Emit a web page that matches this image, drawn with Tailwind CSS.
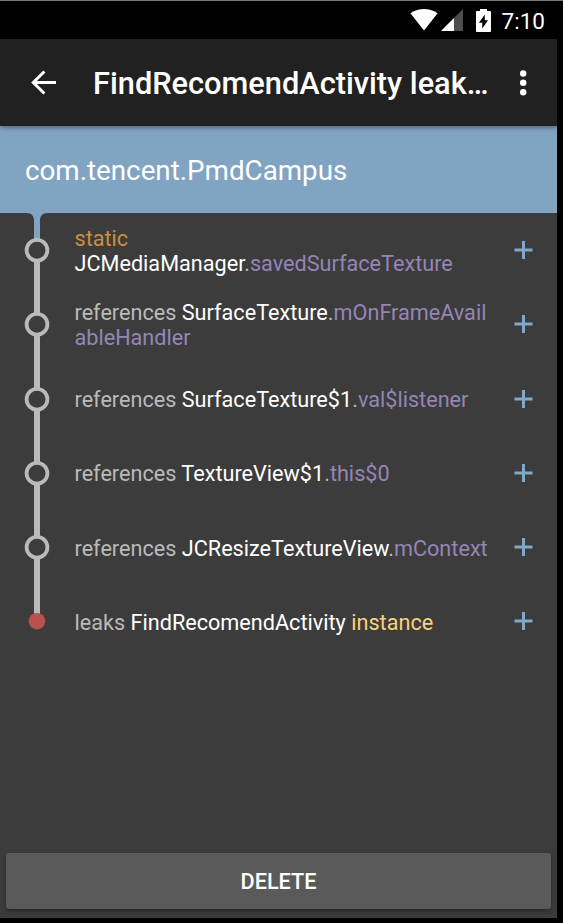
<!DOCTYPE html>
<html lang="en">
<head>
<meta charset="utf-8">
<title>Leak trace</title>
<script src="https://cdn.jsdelivr.net/npm/@tailwindcss/browser@4"></script>
</head>
<body class="bg-black">
<div class="flex h-[923px] w-[563px] flex-col overflow-hidden border-t border-[#777] bg-black font-['Roboto',sans-serif] text-white">
  <div class="flex h-[38px] shrink-0 items-center justify-end pr-[18px]">
    <svg class="mr-[3px] h-[22px] w-[28px]" viewBox="0 0 28 22"><path d="M0.4 4.2Q14-4.2 27.6 4.2L14 21.6Z" fill="#fff"/></svg>
    <svg class="mr-[13px] h-[22px] w-[22px]" viewBox="0 0 22 22"><path d="M22 0V22H0Z" fill="#4d4d4d"/><path d="M13 9V22H0Z" fill="#fff"/></svg>
    <svg class="mr-[11px] h-[23px] w-[15px]" viewBox="0 0 15 23"><path fill-rule="evenodd" d="M4 0h7v2h3q1 0 1 1v19q0 1-1 1h-13Q0 23 0 22V3q0-1 1-1H4ZM8.800 5.500L2.900 13.800H6.300V19.500L12 11.300H8.800Z" fill="#fff"/></svg>
    <span class="pt-[2px] text-[22.500px] leading-[36px]">7:10</span>
  </div>
  <div class="flex h-[879px] w-[557px] shrink-0 flex-col bg-[#3c3c3c]">
    <header class="z-10 flex h-[87px] shrink-0 items-center bg-[#212121] shadow-[0_1px_5px_rgba(0,0,0,0.5)]">
      <svg class="ml-[31px] h-[25px] w-[25px] shrink-0" viewBox="0 0 25 25" fill="none" stroke="#fff" stroke-width="3"><path d="M25 12.500H2.500M13.400 1.500L2.300 12.500L13.400 23.500"/></svg>
      <h1 class="ml-[37px] w-[400px] shrink-0 pt-[2px] text-[30.750px] leading-[40px] font-medium whitespace-nowrap">FindRecomendActivity leak…</h1>
      <svg class="ml-[26px] h-[26px] w-[8px] shrink-0" viewBox="0 0 8 26" fill="#fff"><circle cx="4.200" cy="3.500" r="3.200"/><circle cx="4.200" cy="12.800" r="3.200"/><circle cx="4.200" cy="22.200" r="3.200"/></svg>
    </header>
    <div class="flex h-[87px] shrink-0 items-center bg-[#81a4c3] pt-[3px] pl-[25px] text-[27.750px]">com.tencent.PmdCampus</div>
    <main class="flex flex-1 flex-col text-[21.650px] leading-[25px] whitespace-nowrap text-[#bababa]">
      <div class="flex h-[74.250px] items-center">
        <svg class="h-full w-[74.500px] shrink-0 overflow-visible"><path d="M26 0C32 0 34 3 34 8V26H40V8C40 3 42 0 48 0Z" fill="#81a4c3"/><path d="M37 48V76" stroke="#bababa" stroke-width="6"/><circle cx="37" cy="37.200" r="10.400" stroke="#bababa" stroke-width="3.800" fill="#3c3c3c"/></svg>
        <p class="w-[439px] pt-[2px]"><span class="text-[#cc8e40]">static</span><br><span class="text-white">JCMediaManager</span>.<span class="text-[#9585b5]">savedSurfaceTexture</span></p>
        <svg class="h-[18px] w-[19px] shrink-0" viewBox="0 0 19 18"><path d="M.5 9H18.500M9.500 0V18" stroke="#82a7c8" stroke-width="3"/></svg>
      </div>
      <div class="flex h-[74.250px] items-center">
        <svg class="h-full w-[74.500px] shrink-0 overflow-visible"><path d="M37 0V76" stroke="#bababa" stroke-width="6"/><circle cx="37" cy="37.200" r="10.400" stroke="#bababa" stroke-width="3.800" fill="#3c3c3c"/></svg>
        <p class="w-[439px] pt-[2px]">references <span class="text-white">SurfaceTexture</span>.<span class="text-[#9585b5]">mOnFrameAvail<br>ableHandler</span></p>
        <svg class="h-[18px] w-[19px] shrink-0" viewBox="0 0 19 18"><path d="M.5 9H18.500M9.500 0V18" stroke="#82a7c8" stroke-width="3"/></svg>
      </div>
      <div class="flex h-[74.250px] items-center">
        <svg class="h-full w-[74.500px] shrink-0 overflow-visible"><path d="M37 0V76" stroke="#bababa" stroke-width="6"/><circle cx="37" cy="37.200" r="10.400" stroke="#bababa" stroke-width="3.800" fill="#3c3c3c"/></svg>
        <p class="w-[439px] pt-[2px]">references <span class="text-white">SurfaceTexture$1</span>.<span class="text-[#9585b5]">val$listener</span></p>
        <svg class="h-[18px] w-[19px] shrink-0" viewBox="0 0 19 18"><path d="M.5 9H18.500M9.500 0V18" stroke="#82a7c8" stroke-width="3"/></svg>
      </div>
      <div class="flex h-[74.250px] items-center">
        <svg class="h-full w-[74.500px] shrink-0 overflow-visible"><path d="M37 0V76" stroke="#bababa" stroke-width="6"/><circle cx="37" cy="37.200" r="10.400" stroke="#bababa" stroke-width="3.800" fill="#3c3c3c"/></svg>
        <p class="w-[439px] pt-[2px]">references <span class="text-white">TextureView$1</span>.<span class="text-[#9585b5]">this$0</span></p>
        <svg class="h-[18px] w-[19px] shrink-0" viewBox="0 0 19 18"><path d="M.5 9H18.500M9.500 0V18" stroke="#82a7c8" stroke-width="3"/></svg>
      </div>
      <div class="flex h-[74.250px] items-center">
        <svg class="h-full w-[74.500px] shrink-0 overflow-visible"><path d="M37 0V76" stroke="#bababa" stroke-width="6"/><circle cx="37" cy="37.200" r="10.400" stroke="#bababa" stroke-width="3.800" fill="#3c3c3c"/></svg>
        <p class="w-[439px] pt-[2px]">references <span class="text-white">JCResizeTextureView</span>.<span class="text-[#9585b5]">mContext</span></p>
        <svg class="h-[18px] w-[19px] shrink-0" viewBox="0 0 19 18"><path d="M.5 9H18.500M9.500 0V18" stroke="#82a7c8" stroke-width="3"/></svg>
      </div>
      <div class="flex h-[74.250px] items-center">
        <svg class="h-full w-[74.500px] shrink-0 overflow-visible"><path d="M37 0V34" stroke="#bababa" stroke-width="6"/><circle cx="37" cy="37.200" r="8.300" fill="#b9524f"/></svg>
        <p class="w-[439px] pt-[2px]">leaks <span class="text-white">FindRecomendActivity</span> <span class="text-[#f8d27b]">instance</span></p>
        <svg class="h-[18px] w-[19px] shrink-0" viewBox="0 0 19 18"><path d="M.5 9H18.500M9.500 0V18" stroke="#82a7c8" stroke-width="3"/></svg>
      </div>
    </main>
    <button class="mx-[6px] mb-[9px] h-[56px] shrink-0 rounded-[3px] bg-[#5a5a5b] pt-[2px] text-[21.700px] font-medium text-white shadow-[0_2px_4px_rgba(0,0,0,0.4)]">DELETE</button>
  </div>
</div>
</body>
</html>
